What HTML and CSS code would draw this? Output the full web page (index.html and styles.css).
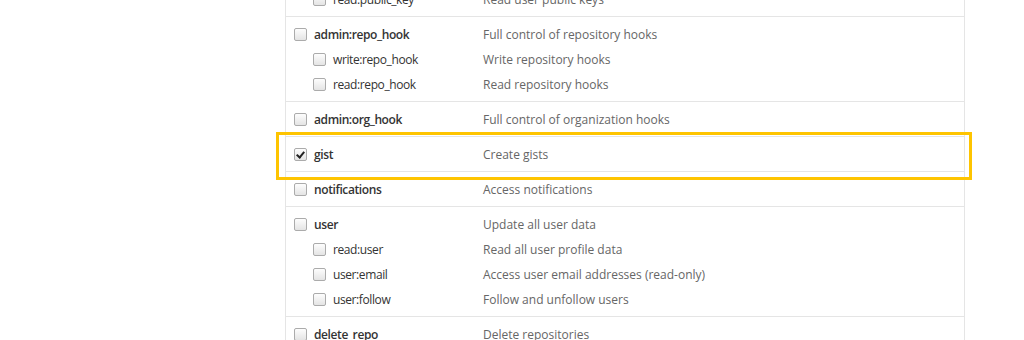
FILE: index.html
```html
<!DOCTYPE html>
<html lang="en">
<head>
    <meta charset="UTF-8">
    <meta name="viewport" content="width=device-width, initial-scale=1.0">
    <title>Scopes</title>
    <link rel="stylesheet" href="styles.css">
</head>
<body>
    <div class="scopes">
        <div class="group">
            <div class="item sub"><span class="box"></span><span class="name">read:public_key</span><span class="desc">Read user public keys</span></div>
        </div>
        <div class="group">
            <div class="item"><span class="box"></span><span class="name">admin:repo_hook</span><span class="desc">Full control of repository hooks</span></div>
            <div class="item sub"><span class="box"></span><span class="name">write:repo_hook</span><span class="desc">Write repository hooks</span></div>
            <div class="item sub"><span class="box"></span><span class="name">read:repo_hook</span><span class="desc">Read repository hooks</span></div>
        </div>
        <div class="group">
            <div class="item"><span class="box"></span><span class="name">admin:org_hook</span><span class="desc">Full control of organization hooks</span></div>
        </div>
        <div class="group marked">
            <div class="item"><span class="box checked"></span><span class="name">gist</span><span class="desc">Create gists</span></div>
        </div>
        <div class="group">
            <div class="item"><span class="box"></span><span class="name">notifications</span><span class="desc">Access notifications</span></div>
        </div>
        <div class="group">
            <div class="item"><span class="box"></span><span class="name">user</span><span class="desc">Update all user data</span></div>
            <div class="item sub"><span class="box"></span><span class="name">read:user</span><span class="desc">Read all user profile data</span></div>
            <div class="item sub"><span class="box"></span><span class="name">user:email</span><span class="desc">Access user email addresses (read-only)</span></div>
            <div class="item sub"><span class="box"></span><span class="name">user:follow</span><span class="desc">Follow and unfollow users</span></div>
        </div>
        <div class="group">
            <div class="item"><span class="box"></span><span class="name">delete_repo</span><span class="desc">Delete repositories</span></div>
        </div>
    </div>
</body>
</html>
```
FILE: styles.css
```css
html{
  font-family: 'Open Sans', 'Noto Sans', sans-serif;
}

body{
  margin: 0;
  background-color: #fff;
  color: #333;
  font-size: 12px;
}

.scopes{
  width: 678px;
  margin-left: 285px;
  margin-top: -18px;
  border-left: 1px solid #e5e5e5;
  border-right: 1px solid #e5e5e5;
}

.group{
  position: relative;
  border-top: 1px solid #e5e5e5;
  padding: 5px 0 4px;
}

.group:first-child{
  border-top: none;
}

.marked::after{
  content: "";
  position: absolute;
  left: -10px;
  right: -8px;
  top: -5px;
  bottom: -9px;
  border: 3px solid #fec400;
}

.item{
  display: flex;
  align-items: center;
  height: 25px;
  padding-left: 8px;
}

.item.sub{
  padding-left: 27px;
}

.box{
  width: 11px;
  height: 11px;
  border: 1px solid #ababab;
  border-radius: 2px;
  background: linear-gradient(#fdfdfd, #e4e4e4);
  margin-right: 7px;
  position: relative;
  flex-shrink: 0;
}

.box.checked::after{
  content: "";
  position: absolute;
  left: 3px;
  top: 1px;
  width: 3px;
  height: 6px;
  border: solid #222;
  border-width: 0 2px 2px 0;
  transform: rotate(40deg);
}

.name{
  width: 169px;
  font-weight: 600;
  letter-spacing: -0.4px;
}

.sub .name{
  width: 150px;
  font-weight: 400;
}

.desc{
  color: #666;
}
```
